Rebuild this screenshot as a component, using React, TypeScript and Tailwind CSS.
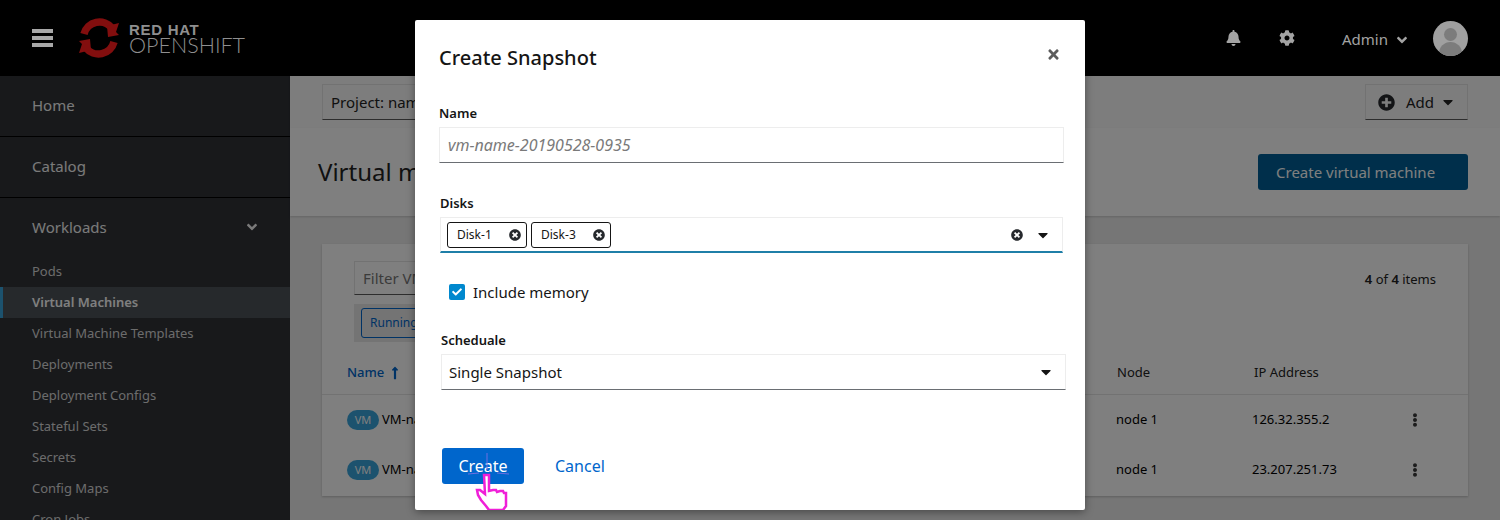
import { FaAngleDown, FaBell, FaCaretDown, FaCheck, FaCog, FaEllipsisV, FaLongArrowAltUp, FaPlusCircle, FaTimes, FaTimesCircle } from 'react-icons/fa';

const font = "font-['Noto_Sans',sans-serif]";

function Logo() {
  return (
    <div className="flex items-center gap-[8px]">
      <svg viewBox="0 0 44 42" className="w-[44px] h-[42px]">
        <path d="M7 17A16 16 0 0 1 35 11" fill="none" stroke="#820e0e" strokeWidth="7.5" />
        <path d="M37 25A16 16 0 0 1 9 31" fill="none" stroke="#820e0e" strokeWidth="7.5" />
        <path d="M30 9l12 -3 -3 9 3 3 -11 2z" fill="#820e0e" />
        <path d="M14 33L2 36l3 -9 -3 -3 11 -2z" fill="#820e0e" />
      </svg>
      <div className="flex flex-col text-[#8f8f8f] mt-[2px]">
        <span className="text-[15px] font-bold tracking-[0.7px] leading-[13px] font-['Liberation_Sans',sans-serif]">RED HAT</span>
        <span className="text-[21.5px] leading-[19px] font-['Lato',sans-serif] font-light">OPENSHIFT</span>
      </div>
    </div>
  );
}

function Sidebar() {
  const links = ['Pods', 'Virtual Machines', 'Virtual Machine Templates', 'Deployments', 'Deployment Configs', 'Stateful Sets', 'Secrets', 'Config Maps', 'Cron Jobs'];
  return (
    <aside className="w-[290px] shrink-0 bg-[#303237] text-[#f5f5f5]">
      <div className="h-[61px] pl-[32px] pb-[2px] flex items-center text-[15px] border-b border-[#000]">Home</div>
      <div className="h-[61px] pl-[32px] pb-[2px] flex items-center text-[15px] border-b border-[#000]">Catalog</div>
      <div className="h-[58px] pl-[32px] pr-[30px] flex items-center justify-between text-[15px]">
        Workloads
        <FaAngleDown className="w-[16px] h-[16px]" />
      </div>
      <div>
        {links.map((l) => (
          <div
            key={l}
            className={
              l === 'Virtual Machines'
                ? 'h-[31px] pl-[29px] flex items-center text-[13px] font-semibold text-white bg-[#4d5258] border-l-[3px] border-[#39a5dc]'
                : 'h-[31px] pl-[32px] flex items-center text-[13px] text-[#d8d8d8]'
            }
          >
            {l}
          </div>
        ))}
      </div>
    </aside>
  );
}

function Row({ ip }: { ip: string }) {
  return (
    <div className="h-[50px] flex items-center text-[13px] text-black">
      <div className="w-[794px] flex items-center pl-[25px] gap-[3px]">
        <span className="w-[32px] h-[20px] rounded-full bg-[#39a5dc] flex items-center justify-center text-[11px] text-white">VM</span>
        <span>VM-name</span>
      </div>
      <div className="w-[136px]">node 1</div>
      <div className="w-[156px]">{ip}</div>
      <FaEllipsisV className="w-[14px] h-[14px] text-[#3b3b3b]" />
    </div>
  );
}

function Main() {
  return (
    <main className="flex-1 min-w-0 bg-[#ececec]">
      <div className="relative h-[52px] bg-[#fbfbfb] pt-[8px] px-[32px] flex justify-between items-start shadow-[0_1px_2px_rgba(0,0,0,0.2)]">
        <div className="w-[300px] h-[36px] border border-[#e4e4e4] border-b-[#5a5a5a] flex items-center px-[8px] text-[15px] text-[#222]">Project: name</div>
        <div className="w-[103px] h-[36px] border border-[#e4e4e4] border-b-[#5a5a5a] flex items-center pl-[12px] text-[15px] text-[#222]">
          <FaPlusCircle className="w-[17px] h-[17px] text-[#26292d]" />
          <span className="ml-[11px]">Add</span>
          <FaCaretDown className="w-[16px] h-[16px] ml-[6px] text-[#222]" />
        </div>
      </div>
      <div className="relative h-[88px] bg-white pl-[28px] pr-[32px] flex justify-between items-center shadow-[0_1px_2px_rgba(0,0,0,0.15)]">
        <span className="text-[24px] text-[#222]">Virtual machines</span>
        <span className="w-[210px] h-[36px] bg-[#005f96] rounded-[3px] text-white text-[15px] flex items-center pl-[18px]">Create virtual machine</span>
      </div>
      <div className="mx-[32px] mt-[28px] h-[252px] bg-white shadow-[0_1px_2px_rgba(0,0,0,0.2)]">
        <div className="h-[52px] pt-[17px] px-[32px] flex justify-between items-start">
          <div className="w-[200px] h-[34px] border border-[#e4e4e4] border-b-[#5a5a5a] flex items-center px-[8px] text-[15px] text-[#777]">Filter VMs</div>
          <span className="text-[13px] text-[#222] mt-[9px]"><b className="font-semibold">4</b> of <b className="font-semibold">4</b> items</span>
        </div>
        <div className="pl-[32px] pt-[8px] h-[56px]">
          <div className="inline-flex h-[38px] items-center bg-[#e8e8e8] px-[7px]">
            <span className="h-[30px] px-[8px] border border-[#0066cc] rounded-[3px] flex items-center text-[12px] text-[#0066cc]">Running VMs</span>
          </div>
        </div>
        <div className="h-[43px] flex items-center border-b border-[#e4e4e4] text-[13px] text-[#222]">
          <div className="w-[795px] pl-[25px] text-[#0066cc] font-medium flex items-center gap-[5px]">
            Name
            <FaLongArrowAltUp className="w-[12px] h-[14px]" />
          </div>
          <div className="w-[137px]">Node</div>
          <div>IP Address</div>
        </div>
        <Row ip="126.32.355.2" />
        <Row ip="23.207.251.73" />
      </div>
    </main>
  );
}

function Dialog() {
  return (
    <div className="absolute left-[415px] top-[20px] w-[670px] h-[490px] bg-white rounded-[2px] shadow-[0_2px_8px_rgba(0,0,0,0.4)] text-[#151515]">
      <div className="px-[24px] pt-[24px] flex justify-between items-center">
        <h1 className="text-[20px] leading-[27px] font-medium">Create Snapshot</h1>
        <FaTimes className="w-[15px] h-[15px] text-[#5c5c5c] -mt-[7px]" />
      </div>
      <div className="pl-[24px] pr-[21px] mt-[33px]">
        <label className="block text-[13px] leading-[18px] font-semibold">Name</label>
        <div className="mt-[5px] h-[36px] border border-[#ededed] border-b-[#6a6e73] flex items-center pl-[8px] text-[16px] italic text-[#7a7a7a]">vm-name-20190528-0935</div>
      </div>
      <div className="pl-[25px] pr-[22px] mt-[31px]">
        <label className="block text-[13px] leading-[18px] font-semibold">Disks</label>
        <div className="mt-[5px] h-[36px] border border-[#ededed] border-b-[2px] border-b-[#1f7fa8] flex items-center pl-[6px] pr-[11px]">
          <div className="flex-1 flex gap-[4px]">
            {['Disk-1', 'Disk-3'].map((d) => (
              <span key={d} className="w-[80px] h-[26px] border border-[#151515] rounded-[3px] flex items-center justify-between pl-[9px] pr-[5px] text-[12px]">
                {d}
                <FaTimesCircle className="w-[12px] h-[12px] text-[#26292d]" />
              </span>
            ))}
          </div>
          <FaTimesCircle className="w-[12px] h-[12px] text-[#26292d]" />
          <FaCaretDown className="w-[16px] h-[16px] ml-[12px] text-[#151515]" />
        </div>
      </div>
      <div className="pl-[34px] mt-[29px] flex items-center gap-[8px] text-[15px] leading-[20px]">
        <span className="w-[16px] h-[16px] bg-[#0088ce] rounded-[2px] flex items-center justify-center">
          <FaCheck className="w-[10px] h-[10px] text-white" />
        </span>
        Include memory
      </div>
      <div className="pl-[26px] pr-[19px] mt-[29px]">
        <label className="block text-[13px] leading-[18px] font-semibold">Scheduale</label>
        <div className="mt-[5px] h-[36px] border border-[#ededed] border-b-[#6a6e73] flex items-center justify-between pl-[7px] pr-[11px] text-[15px]">
          Single Snapshot
          <FaCaretDown className="w-[16px] h-[16px] text-[#151515]" />
        </div>
      </div>
      <div className="pl-[27px] mt-[58px] flex items-center">
        <span className="w-[82px] h-[36px] bg-[#06c] rounded-[3px] text-white text-[16px] flex items-center justify-center">Create</span>
        <span className="ml-[31px] text-[16px] text-[#06c]">Cancel</span>
      </div>
    </div>
  );
}

function Pointer() {
  return (
    <svg viewBox="0 0 44 58" className="absolute left-[466px] top-[452px] w-[44px] h-[58px]">
      <path d="M21 1v17M2 22l11 -1M31 21l12 1" stroke="#6f6fe0" strokeWidth="1" fill="none" />
      <path
        d="M18 23h5v16l4 -1h3l1 2 3 -1h3l1 2h2v13l-3 4H23l-3 -4 -5 -6 -3 -5 -1 -5h3l5 4z"
        fill="#fff"
        stroke="#f01fd8"
        strokeWidth="2.5"
      />
    </svg>
  );
}

export default function App() {
  return (
    <div className={`relative w-[1500px] h-[520px] overflow-hidden ${font}`}>
      <header className="h-[76px] bg-black text-[#a3a3a3] flex items-center px-[32px]">
        <div className="flex flex-col gap-[3px] w-[21px]">
          <span className="h-[4px] bg-[#a8a8a8]" />
          <span className="h-[4px] bg-[#a8a8a8]" />
          <span className="h-[4px] bg-[#a8a8a8]" />
        </div>
        <div className="ml-[24px]"><Logo /></div>
        <div className="flex-1" />
        <FaBell className="w-[15px] h-[16px]" />
        <FaCog className="w-[16px] h-[16px] ml-[38px]" />
        <span className="ml-[47px] text-[15px] mt-[2px]">Admin</span>
        <FaAngleDown className="w-[16px] h-[16px] ml-[6px] mt-[3px]" />
        <div className="ml-[23px] w-[35px] h-[35px] rounded-full bg-[#a0a0a0] overflow-hidden relative flex justify-center">
          <span className="absolute top-[7px] w-[13px] h-[13px] rounded-full bg-[#7c7c7c]" />
          <span className="absolute top-[21px] w-[23px] h-[20px] rounded-t-full bg-[#7c7c7c]" />
        </div>
      </header>
      <div className="relative flex h-[444px]">
        <Sidebar />
        <Main />
        <div className="absolute inset-0 bg-black/50" />
      </div>
      <Dialog />
      <Pointer />
    </div>
  );
}
